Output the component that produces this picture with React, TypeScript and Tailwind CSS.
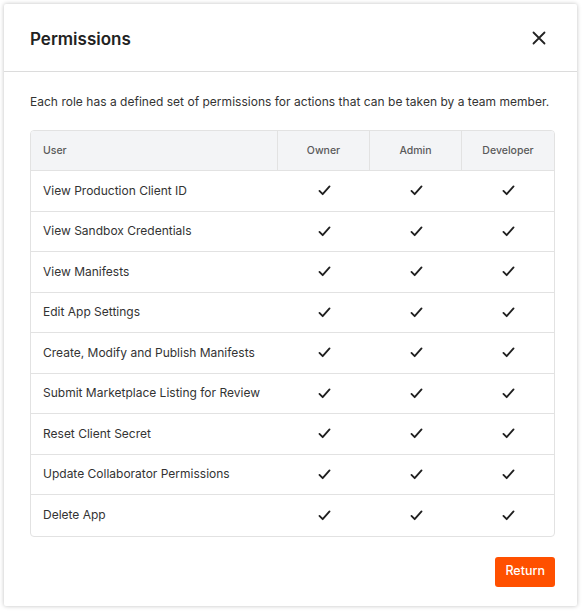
const ROWS = [
  "View Production Client ID",
  "View Sandbox Credentials",
  "View Manifests",
  "Edit App Settings",
  "Create, Modify and Publish Manifests",
  "Submit Marketplace Listing for Review",
  "Reset Client Secret",
  "Update Collaborator Permissions",
  "Delete App",
];

const ROLES = ["Owner", "Admin", "Developer"];

function Check() {
  return (
    <svg width="13" height="11" viewBox="0 0 14 12" fill="none">
      <path d="M1.5 6.5 L5 10 L12.5 1.5" stroke="#1f1f1f" strokeWidth="2" strokeLinecap="round" strokeLinejoin="round" />
    </svg>
  );
}

export default function App() {
  return (
    <div className="w-[582px] h-[612px] bg-white pt-[4px] pl-[4px] font-['Inter',sans-serif]">
      <div className="w-[573px] h-[602px] bg-white rounded-[2px] shadow-[0_0_4px_rgba(0,0,0,0.25)] flex flex-col">
        {/* Header */}
        <div className="h-[68px] flex items-center justify-between pl-[26px] pr-[30px] border-b border-[#dcdcdc]">
          <h2 className="text-[17px] leading-[20px] mt-[2px] font-semibold text-[#222]">Permissions</h2>
          <button className="w-[16px] h-[16px] flex items-center justify-center" aria-label="Close">
            <svg width="14" height="14" viewBox="0 0 14 14" fill="none">
              <path d="M1.5 1.5 L12.5 12.5 M12.5 1.5 L1.5 12.5" stroke="#222" strokeWidth="1.8" strokeLinecap="round" />
            </svg>
          </button>
        </div>

        {/* Body */}
        <div className="pl-[26px] pr-[22px] pt-[22px]">
          <p className="text-[12px] leading-[16px] tracking-[0.02px] text-[#333] whitespace-nowrap">
            Each role has a defined set of permissions for actions that can be taken by a team member.
          </p>

          <div className="mt-[20px] border border-[#e2e2e2] rounded-[4px] overflow-hidden">
            <div className="flex h-[40px] bg-[#f3f4f6] border-b border-[#e2e2e2] text-[10.5px] font-medium text-[#5a5a5a]">
              <div className="w-[247px] flex items-center pl-[12px] border-r border-[#e2e2e2]">User</div>
              <div className="w-[92px] flex items-center justify-center border-r border-[#e2e2e2]">Owner</div>
              <div className="w-[92px] flex items-center justify-center border-r border-[#e2e2e2]">Admin</div>
              <div className="flex-1 flex items-center justify-center">Developer</div>
            </div>
            {ROWS.map((label, i) => (
              <div
                key={label}
                className={`flex h-[40.5px] items-center text-[12px] text-[#333] ${i < ROWS.length - 1 ? "border-b border-[#e2e2e2]" : ""}`}
              >
                <div className="w-[247px] pl-[12px]">{label}</div>
                {ROLES.map((r, j) => (
                  <div key={r} className={`flex justify-center ${j < 2 ? "w-[92px]" : "flex-1"}`}>
                    <Check />
                  </div>
                ))}
              </div>
            ))}
          </div>

          <div className="flex justify-end mt-[20px]">
            <button className="h-[30px] px-[10px] rounded-[3px] bg-[#ff5000] text-white text-[12.5px] font-medium">
              Return
            </button>
          </div>
        </div>
      </div>
    </div>
  );
}
